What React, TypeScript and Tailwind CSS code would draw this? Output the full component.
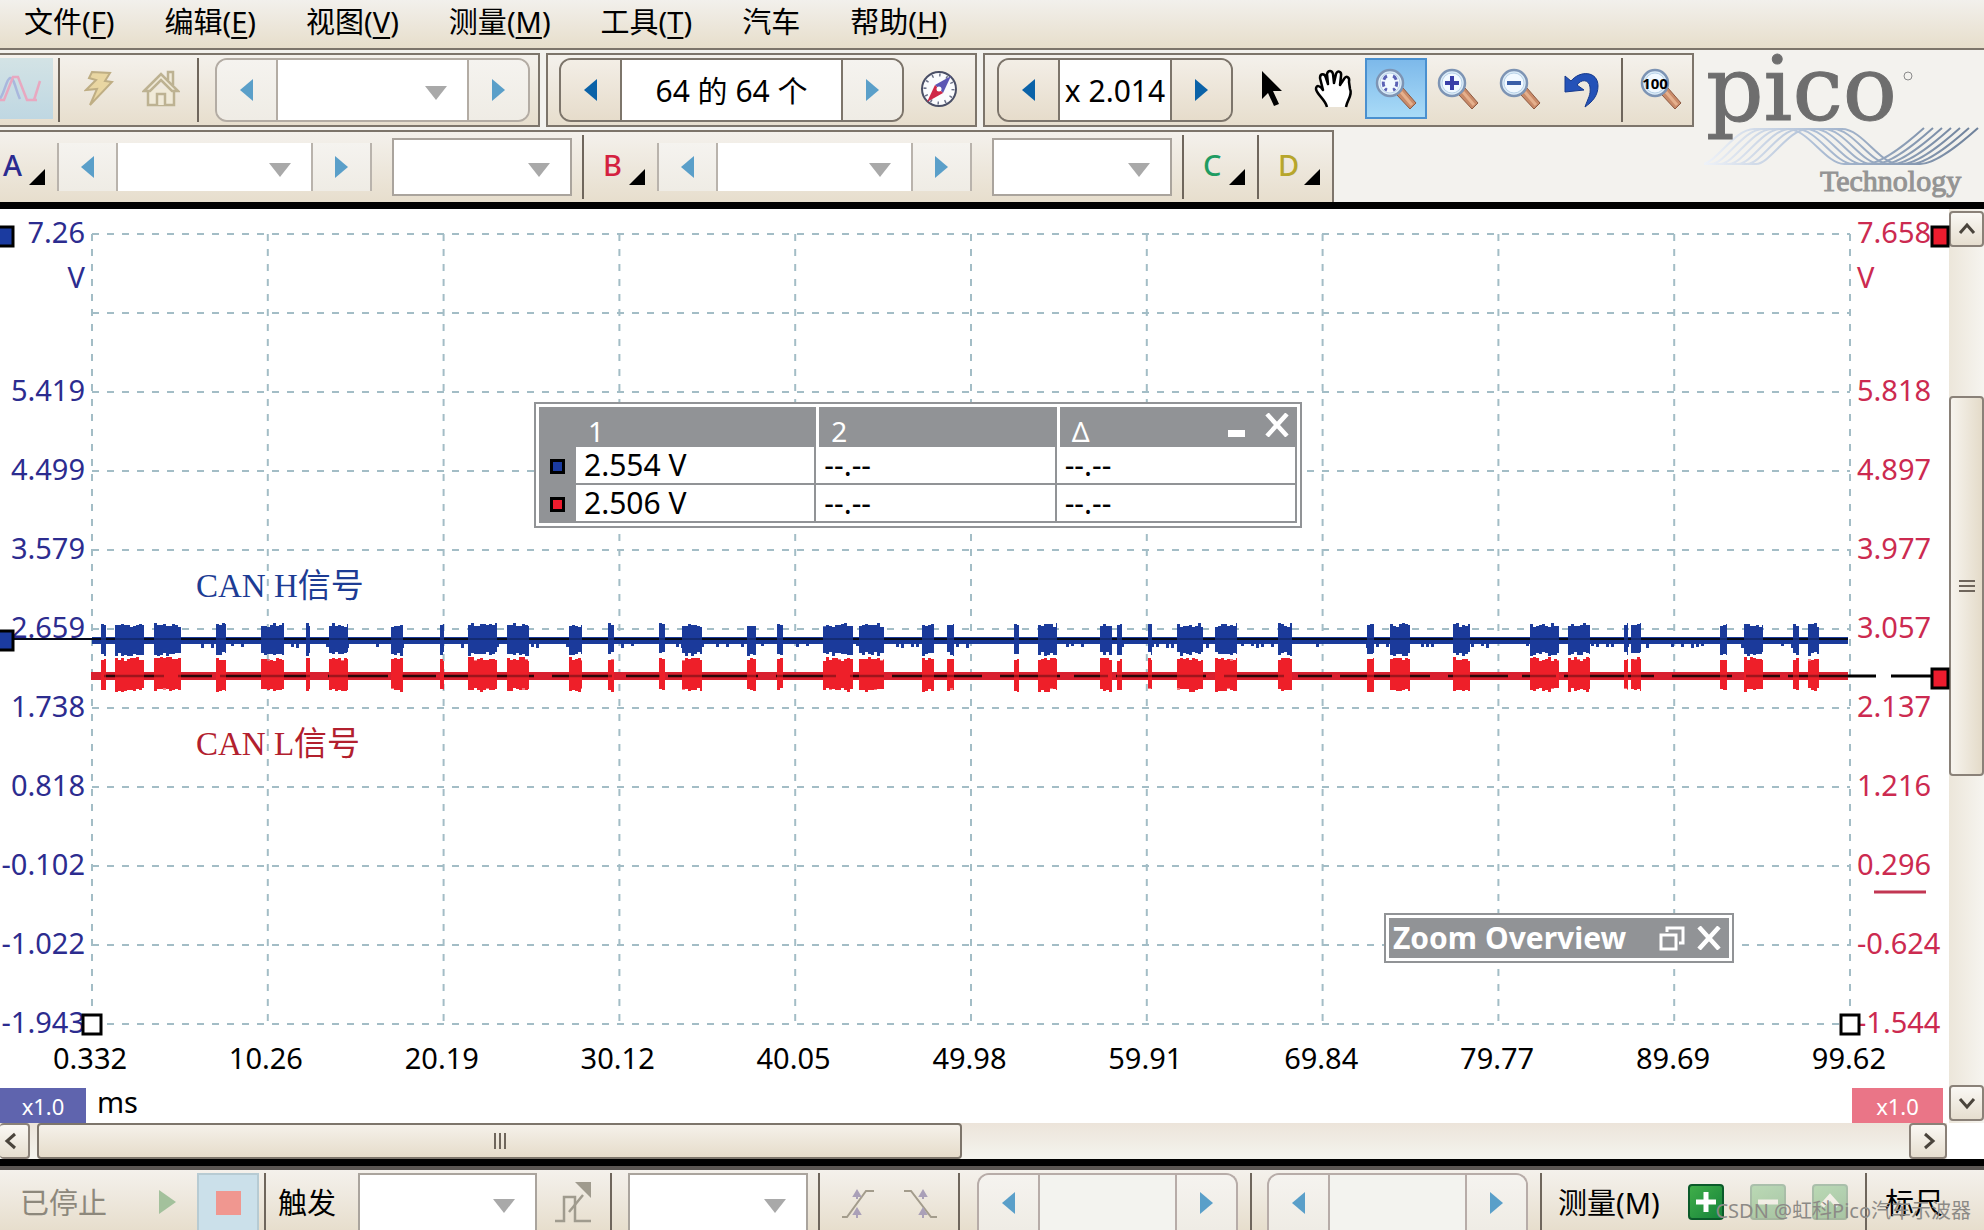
import { ReactNode } from "react";
import { clsx } from "clsx";

const menus = [
  { label: "文件", key: "F" },
  { label: "编辑", key: "E" },
  { label: "视图", key: "V" },
  { label: "测量", key: "M" },
  { label: "工具", key: "T" },
  { label: "汽车", key: "" },
  { label: "帮助", key: "H" },
];

const leftAxis = ["7.26", "", "5.419", "4.499", "3.579", "2.659", "1.738", "0.818", "-0.102", "-1.022", "-1.943"];
const rightAxis = ["7.658", "", "5.818", "4.897", "3.977", "3.057", "2.137", "1.216", "0.296", "-0.624", "-1.544"];
const timeAxis = ["0.332", "10.26", "20.19", "30.12", "40.05", "49.98", "59.91", "69.84", "79.77", "89.69", "99.62"];

// [start, end] of every CAN frame on the time axis, in plot units
const frames = [
  [9, 14], [23, 52], [62, 89], [124, 134], [169, 192], [214, 218], [237, 256], [299, 311], [348, 352],
  [376, 405], [415, 437], [477, 490], [516, 522], [567, 573], [590, 610], [655, 664], [685, 691],
  [731, 761], [767, 792], [830, 842], [855, 862], [922, 927], [946, 965], [1008, 1020], [1025, 1030],
  [1056, 1060], [1085, 1111], [1123, 1145], [1186, 1200], [1275, 1282], [1298, 1318], [1361, 1378],
  [1438, 1467], [1476, 1498], [1532, 1536], [1539, 1549], [1628, 1635], [1652, 1671], [1701, 1707], [1716, 1727],
];

function noise(n: number) {
  const v = Math.sin(n * 12.9898) * 43758.5453;
  return v - Math.floor(v);
}

function burstPath(top: number, bottom: number, seed: number) {
  return frames
    .map(([start, end]) => {
      let up = "";
      let down = "";
      for (let x = start; x < end; x += 3) {
        const next = Math.min(x + 3, end);
        const t = top + Math.round(noise(x + seed) * 4);
        const b = bottom - Math.round(noise(x * 2 + seed) * 4);
        up += `L${x} ${t}L${next} ${t}`;
        down = `L${next} ${b}L${x} ${b}` + down;
      }
      return "M" + (up + down).slice(1) + "Z";
    })
    .join("");
}

// small ripples hanging below the idle level between frames
function ripplePath() {
  let d = "";
  for (let x = 4; x < 1750; x += 5) {
    if (noise(x * 3) > 0.72) d += `M${x} 409v${3 + Math.round(noise(x) * 2)}h3v-5z`;
  }
  return d;
}

function Arrow({ dir, dim }: { dir: "left" | "right"; dim?: boolean }) {
  return (
    <svg width="13" height="22" viewBox="0 0 13 22" className={dim ? "text-[#5a9fc9]" : "text-[#0a62a8]"}>
      <path d={dir === "left" ? "M13 0V22L0 11Z" : "M0 0V22L13 11Z"} fill="currentColor" />
    </svg>
  );
}

function StepButton({ dir, dim, className }: { dir: "left" | "right"; dim?: boolean; className?: string }) {
  return (
    <button
      aria-label={dir === "left" ? "Previous" : "Next"}
      className={clsx(
        "flex w-[59px] shrink-0 items-center justify-center bg-gradient-to-b",
        dim ? "from-[#f5f3ef] to-[#efece5]" : "from-[#f3eee6] to-[#e6dccb]",
        className
      )}
    >
      <Arrow dir={dir} dim={dim} />
    </button>
  );
}

function Combo({ label, className }: { label: string; className?: string }) {
  return (
    <div className={clsx("relative shrink-0 bg-white", className)}>
      <select aria-label={label} className="size-full appearance-none bg-transparent outline-none">
        <option></option>
      </select>
      <svg width="22" height="14" viewBox="0 0 22 14" className="pointer-events-none absolute top-1/2 right-5 -mt-1">
        <path d="M0 0H22L11 14Z" fill="#a9a9a9" />
      </svg>
    </div>
  );
}

function Separator({ className }: { className?: string }) {
  return <div className={clsx("w-[2px] shrink-0 bg-[#6f665c]", className)} />;
}

function ToolButton({ label, active, children }: { label: string; active?: boolean; children: ReactNode }) {
  return (
    <button
      aria-label={label}
      className={clsx(
        "flex h-[61px] w-[62px] shrink-0 items-center justify-center",
        active && "border-2 border-[#4a90cf] bg-gradient-to-b from-[#7db9ea] to-[#a9dbf7]"
      )}
    >
      {children}
    </button>
  );
}

function Magnifier({ children }: { children?: ReactNode }) {
  return (
    <svg width="42" height="42" viewBox="0 0 42 42">
      <path d="M23 23l5-3 13 15-6 6-13-14z" fill="#c98a68" stroke="#8d5a42" />
      <path d="M26 24l11 13" stroke="#e5b08d" strokeWidth="3" />
      <circle cx="15" cy="15" r="13" fill="#dcecf8" stroke="#7d94b4" strokeWidth="2.5" />
      <circle cx="15" cy="15" r="10" fill="#f2f9ff" stroke="#b9d2e8" />
      {children}
    </svg>
  );
}

function ChannelButton({ name, color, className }: { name: string; color: string; className?: string }) {
  return (
    <button className={clsx("flex w-[73px] shrink-0 items-center justify-between pr-3 pb-1 pl-[19px] text-[29px] font-medium", className, color)}>
      {name}
      <svg width="16" height="16" viewBox="0 0 16 16" className="mt-6">
        <path d="M16 0V16H0Z" fill="#000" />
      </svg>
    </button>
  );
}

function ChannelControls({ name }: { name: string }) {
  return (
    <>
      <div className="my-2 flex shrink-0">
        <StepButton dir="left" dim className="border-l-2 border-[#b9b3ac]" />
        <Combo label={`${name} range`} className="w-[197px] border-x-2 border-[#b9b3ac]" />
        <StepButton dir="right" dim className="border-r-2 border-[#b9b3ac]" />
      </div>
      <Combo label={`${name} coupling`} className="my-[3px] ml-5 w-[180px] border-2 border-[#aaa49d]" />
    </>
  );
}

function CloseIcon() {
  return (
    <svg width="24" height="24" viewBox="0 0 24 24">
      <path d="M2 1L22 23M22 1L2 23" stroke="#fff" strokeWidth="4.5" />
    </svg>
  );
}

function PicoLogo() {
  const offsets = [0, 9, 18, 27, 36, 45, 54];
  return (
    <svg width="280" height="152" viewBox="0 0 280 152" className="ml-auto shrink-0" role="img" aria-label="pico Technology">
      <defs>
        <linearGradient id="wave" gradientUnits="userSpaceOnUse" x1="0" y1="0" x2="280" y2="0">
          <stop offset="0" stopColor="#eef2f8" />
          <stop offset="0.4" stopColor="#aebfd6" />
          <stop offset="1" stopColor="#6c7f98" />
        </linearGradient>
      </defs>
      {offsets.map((x) => (
        <path
          key={x}
          d={`M${x - 26} 114h24c14 0 32-35 52-35h34c20 0 38 35 56 35h22c16 0 40-20 58-36`}
          fill="none"
          stroke="url(#wave)"
          strokeWidth="2"
        />
      ))}
      <text x="2" y="70" fontSize="90" fontFamily="DejaVu Serif, serif" fill="#6e6e6e" stroke="#6e6e6e">pico</text>
      <circle cx="204" cy="26" r="4" fill="none" stroke="#8a8a8a" />
      <text x="116" y="141" fontSize="30" fontFamily="Liberation Serif, serif" fill="#949494" stroke="#949494">Technology</text>
    </svg>
  );
}

function Plot() {
  const columns = Array.from({ length: 11 }, (_, i) => i * 175.8);
  const rows = Array.from({ length: 11 }, (_, i) => i * 79);
  return (
    <svg viewBox="0 0 1758 790" preserveAspectRatio="none" className="absolute inset-0 size-full overflow-visible">
      <g stroke="#a3bdc6" strokeWidth="2" strokeDasharray="7 8">
        {columns.map((x) => <path key={x} d={`M${x} 0V790`} />)}
        {rows.map((y) => <path key={y} d={`M0 ${y}H1758`} />)}
      </g>

      {/* channel A */}
      <path d="M0 403H1756V410H0Z" fill="#1b3b9b" />
      <path d={ripplePath()} fill="#1b3b9b" />
      <path d={burstPath(389, 422, 3)} fill="#1b3b9b" />
      <path d="M-78 405H1756" stroke="#060a18" strokeWidth="2" />
      <path d={burstPath(392, 418, 8)} fill="#1b3b9b" fillOpacity="0.7" />

      {/* channel B */}
      <path d="M-1 438H1756V446H-1Z" fill="#d9202f" />
      <path d={burstPath(423, 458, 5)} fill="#ee1f2a" />
      <path d="M12 442H1756" stroke="#2a0508" strokeWidth="2.5" strokeDasharray="60 14 34 8 90 18" />
      <path d={burstPath(425, 456, 9)} fill="#ee1f2a" fillOpacity="0.6" />
      <path d="M1756 442H1784M1799 442H1840" stroke="#000" strokeWidth="3" />

      {/* ruler handles */}
      <g stroke="#000" strokeWidth="3">
        <rect x="-96" y="-7" width="17" height="19" fill="#1b3ba0" />
        <rect x="-96" y="397" width="17" height="19" fill="#1b3ba0" />
        <rect x="1840" y="-7" width="16" height="19" fill="#ed1c2e" />
        <rect x="1840" y="435" width="16" height="19" fill="#ed1c2e" />
        <rect x="-9" y="781" width="18" height="19" fill="#fff" />
        <rect x="1749" y="781" width="18" height="19" fill="#fff" />
      </g>
      <path d="M1782 658H1834" stroke="#c23652" strokeWidth="3" />
    </svg>
  );
}

function Readout({ color, value }: { color: string; value: string }) {
  return (
    <tr className="h-[38px]">
      <th scope="row" className="bg-[#919396]">
        <div className={clsx("mx-auto size-[15px] border-[3px] border-black", color)} />
      </th>
      <td className="border-r-2 border-b-2 border-[#919396] bg-white pl-2">{value}</td>
      <td className="border-r-2 border-b-2 border-[#919396] bg-white pl-2">--.--</td>
      <td className="border-r-2 border-b-2 border-[#919396] bg-white pl-2">--.--</td>
    </tr>
  );
}

function RulerWindow() {
  return (
    <div className="absolute top-[168px] left-[442px] w-[768px] border-2 border-[#919396] bg-white p-[3px]">
      <table className="w-full table-fixed border-separate border-spacing-0 text-left text-[30px] leading-[36px]">
        <thead>
          <tr className="h-[40px] bg-[#919396] text-[28px] text-white">
            <th className="w-[37px]" />
            <th className="pt-2 pl-3 font-normal leading-[30px]">1</th>
            <th className="border-l-[3px] border-white pt-2 pl-3 font-normal leading-[30px]">2</th>
            <th className="border-l-[3px] border-white pl-3 font-normal leading-[30px]">
              <div className="flex items-center">
                <span className="pt-2">Δ</span>
                <button aria-label="Minimize" className="mt-3 ml-auto h-[7px] w-[17px] bg-white" />
                <button aria-label="Close" className="mr-2 mb-1 ml-5">
                  <CloseIcon />
                </button>
              </div>
            </th>
          </tr>
        </thead>
        <tbody>
          <Readout color="bg-[#1b3ba0]" value="2.554 V" />
          <Readout color="bg-[#ed1c2e]" value="2.506 V" />
        </tbody>
      </table>
    </div>
  );
}

function ZoomOverview() {
  return (
    <div className="absolute right-[116px] bottom-[61px] w-[350px] border-2 border-[#919396] bg-white p-[3px]">
      <div className="flex h-[40px] items-center bg-[#919396] pr-2 pl-1 text-white">
        <span className="text-[30px] font-bold whitespace-nowrap">Zoom Overview</span>
        <button aria-label="Restore" className="ml-auto">
          <svg width="26" height="26" viewBox="0 0 26 26" fill="none" stroke="#fff" strokeWidth="3">
            <path d="M8 7V3H24V18H20" />
            <path d="M2 10H17V24H2Z" />
          </svg>
        </button>
        <button aria-label="Close" className="ml-3">
          <CloseIcon />
        </button>
      </div>
    </div>
  );
}

function ScrollButton({ label, d, className }: { label: string; d: string; className?: string }) {
  return (
    <button
      aria-label={label}
      className={clsx("flex shrink-0 items-center justify-center rounded border-2 border-[#8a8178] bg-gradient-to-b from-[#faf8f4] to-[#e6decf]", className)}
    >
      <svg width="20" height="20" viewBox="0 0 20 20" fill="none" stroke="#4a443c" strokeWidth="3">
        <path d={d} />
      </svg>
    </button>
  );
}

function MeasureButton({ label, d, dim }: { label: string; d: string; dim?: boolean }) {
  return (
    <button
      aria-label={label}
      className={clsx("flex size-9 shrink-0 items-center justify-center rounded border-2 border-[#0b5a2a] bg-gradient-to-br from-[#3fae49] to-[#12843a]", dim && "opacity-30")}
    >
      <svg width="24" height="24" viewBox="0 0 24 24" fill="none" stroke="#fff" strokeWidth="5">
        <path d={d} />
      </svg>
    </button>
  );
}

export default function App() {
  return (
    <div className="flex h-screen min-h-[700px] flex-col overflow-hidden bg-[#f3f2ee] font-['Noto_Sans','Noto_Sans_CJK_SC',sans-serif] text-black">
      <nav className="flex h-[50px] shrink-0 items-center gap-[50px] border-b-2 border-[#7d756b] bg-gradient-to-b from-[#f2f0ec] to-[#e7decb] pb-1 pl-6 text-[29px]">
        {menus.map((menu) => (
          <button key={menu.label} className="whitespace-nowrap">
            {menu.label}
            {menu.key && <>(<span className="underline decoration-2 underline-offset-4">{menu.key}</span>)</>}
          </button>
        ))}
      </nav>

      <header className="flex h-[152px] shrink-0 overflow-hidden">
        <div className="flex shrink-0 flex-col gap-[3px] pt-[3px]">
          <div className="flex gap-[6px]">
            <div className="flex h-[74px] border-2 border-l-0 border-[#7d756b] bg-gradient-to-b from-[#f4f1ec] to-[#e7decd] py-[3px] pr-2">
              <button aria-label="Scope mode" className="flex h-[61px] w-[53px] items-center bg-gradient-to-b from-[#d3e3e5] to-[#bfd7e2]">
                <svg width="42" height="28" viewBox="0 0 42 28" fill="none" strokeWidth="2.5">
                  <path d="M-2 26C4 22 6 4 10 3S16 16 20 24" stroke="#a9b7dd" />
                  <path d="M0 25H4L13 2H18L27 25H37" stroke="#e8a8c0" />
                  <path d="M34 25L40 6" stroke="#e8a8c0" />
                </svg>
              </button>
              <Separator className="mr-2 ml-[5px]" />
              <ToolButton label="Auto setup">
                <svg width="30" height="38" viewBox="0 0 30 38">
                  <path d="M8 2L26 3 21 11 28 12 6 35 13 19 2 20 12 10 5 8Z" fill="#e9d6a2" stroke="#bfae84" strokeWidth="2" />
                </svg>
              </ToolButton>
              <ToolButton label="Home">
                <svg width="38" height="38" viewBox="0 0 38 38" fill="#f0ead8" stroke="#bdb292" strokeWidth="2.5">
                  <path d="M26 10V2H31V15" />
                  <path d="M6 19V35H32V19" />
                  <path d="M2 21L19 4 36 21H30L19 10 8 21Z" />
                  <path d="M15 35V24H23V35" />
                </svg>
              </ToolButton>
              <Separator className="mr-4 ml-[5px]" />
              <div className="flex w-[315px] overflow-hidden rounded-xl border-2 border-[#b3aca4]">
                <StepButton dir="left" dim />
                <Combo label="Timebase" className="flex-1 border-x-2 border-[#b3aca4]" />
                <StepButton dir="right" dim />
              </div>
            </div>

            <div className="flex h-[74px] border-2 border-[#7d756b] bg-gradient-to-b from-[#f4f1ec] to-[#e7decd] py-[3px] pr-[5px] pl-[11px]">
              <div className="mr-1 flex w-[345px] overflow-hidden rounded-xl border-2 border-[#7d756b]">
                <StepButton dir="left" />
                <input
                  aria-label="Waveform buffer"
                  readOnly
                  value="64 的 64 个"
                  className="min-w-0 flex-1 border-x-2 border-[#7d756b] bg-white text-center text-[30px] outline-none"
                />
                <StepButton dir="right" dim />
              </div>
              <ToolButton label="Buffer navigator">
                <svg width="38" height="38" viewBox="0 0 38 38">
                  <circle cx="19" cy="19" r="17" fill="#fafbfd" stroke="#4a4f66" strokeWidth="2" />
                  <circle cx="19" cy="19" r="14" fill="none" stroke="#6a7088" strokeWidth="3" strokeDasharray="1.5 5.8" />
                  <path d="M31 6L23 23 15 15Z" fill="#5b56b4" />
                  <path d="M7 32L15 15 23 23Z" fill="#d02646" />
                  <circle cx="19" cy="19" r="2.5" fill="#fff" />
                </svg>
              </ToolButton>
            </div>

            <div className="flex h-[74px] border-2 border-[#7d756b] bg-gradient-to-b from-[#f4f1ec] to-[#e7decd] py-[3px] pl-3">
              <div className="mr-2 flex w-[236px] overflow-hidden rounded-xl border-2 border-[#7d756b]">
                <StepButton dir="left" />
                <input
                  aria-label="Zoom factor"
                  readOnly
                  value="x 2.014"
                  className="min-w-0 flex-1 border-x-2 border-[#7d756b] bg-white text-center text-[30px] outline-none"
                />
                <StepButton dir="right" />
              </div>
              <ToolButton label="Select">
                <svg width="22" height="36" viewBox="0 0 22 36">
                  <path d="M1 0V28L7 22 13 35 18 33 12 20H21Z" fill="#000" />
                </svg>
              </ToolButton>
              <ToolButton label="Pan">
                <svg width="40" height="40" viewBox="0 0 40 40" fill="#fff" stroke="#000" strokeWidth="2.5" strokeLinejoin="round">
                  <path d="M13 38C11 30 3 26 2 20 2 16 6 16 9 21L6 9C6 4 11 4 12 9L14 15 13 5C14 1 18 1 19 5L20 14 22 5C23 1 28 2 27 7L26 16 30 10C32 6 36 8 35 13L36 20C39 26 33 31 32 38" />
                </svg>
              </ToolButton>
              <ToolButton label="Marquee zoom" active>
                <Magnifier>
                  <path d="M12 8C7 10 7 20 12 22M18 8C23 10 23 20 18 22" fill="none" stroke="#5b62b5" strokeWidth="3" strokeDasharray="5 2" />
                </Magnifier>
              </ToolButton>
              <ToolButton label="Zoom in">
                <Magnifier>
                  <path d="M15 8V22M8 15H22" stroke="#3a3fa8" strokeWidth="4" />
                </Magnifier>
              </ToolButton>
              <ToolButton label="Zoom out">
                <Magnifier>
                  <path d="M8 15H22" stroke="#3a5fa8" strokeWidth="4" />
                </Magnifier>
              </ToolButton>
              <ToolButton label="Undo zoom">
                <svg width="36" height="38" viewBox="0 0 36 38">
                  <path d="M1 6L7 11C16 0 34 1 34 16 34 26 28 32 21 37 24 28 27 25 26 17 25 9 17 9 13 15L20 20 1 22Z" fill="#2452b8" stroke="#173a8c" />
                </svg>
              </ToolButton>
              <Separator className="mr-[7px] ml-2" />
              <ToolButton label="Zoom 100%">
                <Magnifier>
                  <text x="15" y="21" textAnchor="middle" fontSize="15" fontWeight="bold" fill="#000">100</text>
                </Magnifier>
              </ToolButton>
            </div>
          </div>

          <div className="flex h-[72px] self-start border-2 border-b-0 border-l-0 border-[#7d756b] bg-gradient-to-b from-[#f4f1ec] to-[#e7decd] py-[3px]">
            <ChannelButton name="A" color="text-[#2b2b90]" className="-ml-4" />
            <ChannelControls name="A" />
            <Separator className="ml-[10px]" />
            <ChannelButton name="B" color="text-[#d4213f]" />
            <ChannelControls name="B" />
            <Separator className="ml-[10px]" />
            <ChannelButton name="C" color="text-[#1f9c62]" />
            <Separator />
            <ChannelButton name="D" color="text-[#b7a62c]" />
          </div>
        </div>
        <PicoLogo />
      </header>

      <div className="h-[7px] shrink-0 bg-black" />

      <main className="flex min-h-0 flex-1 bg-white">
        <div className="flex min-w-0 flex-1 flex-col text-[29px] leading-[30px]">
          <div className="flex min-h-0 flex-1 pt-[25px]">
            <div className="-mt-[17px] -mb-[13px] flex w-[92px] shrink-0 flex-col justify-between pr-[7px] text-right text-[#2c2c8f]">
              {leftAxis.map((value, i) => (
                <div key={i} className="h-[30px]">
                  {value}
                  {i === 0 && <div className="mt-[15px]">V</div>}
                </div>
              ))}
            </div>
            <div className="relative min-w-0 flex-1">
              <Plot />
              <div className="absolute top-[337px] left-[104px] font-['Liberation_Serif','Noto_Sans_CJK_SC',serif] text-[33px] text-[#1d3c94]">CAN H信号</div>
              <div className="absolute top-[495px] left-[104px] font-['Liberation_Serif','Noto_Sans_CJK_SC',serif] text-[33px] text-[#b2202e]">CAN L信号</div>
              <RulerWindow />
              <ZoomOverview />
            </div>
            <div className="-mt-[17px] -mb-[13px] flex w-[99px] shrink-0 flex-col justify-between pl-[7px] text-[#cc2a50]">
              {rightAxis.map((value, i) => (
                <div key={i} className="h-[30px]">
                  {value}
                  {i === 0 && <div className="mt-[15px]">V</div>}
                </div>
              ))}
            </div>
          </div>
          <div className="flex h-[64px] shrink-0 items-center justify-between pt-1 pr-[60px] pl-[50px]">
            {timeAxis.map((value) => (
              <span key={value} className="w-20 text-center">{value}</span>
            ))}
          </div>
          <div className="flex h-[35px] shrink-0 items-start">
            <button className="h-full w-[86px] bg-[#5f64ae] text-[22px] text-white">x1.0</button>
            <span className="ml-[11px] text-[29px] leading-[28px]">ms</span>
            <button className="mr-[6px] ml-auto h-full w-[91px] bg-[#ea7587] text-[22px] text-white">x1.0</button>
          </div>
        </div>

        {/* vertical scroll bar */}
        <div className="flex w-[35px] shrink-0 flex-col bg-gradient-to-r from-[#ece6da] to-[#f6f4ef] py-[2px]">
          <ScrollButton label="Scroll up" d="M3 14L10 6L17 14" className="h-9" />
          <div className="flex flex-1 flex-col">
            <div className="h-[149px]" />
            <div className="flex h-[380px] flex-col items-center justify-center gap-[3px] rounded border-2 border-[#8a8178] bg-gradient-to-r from-[#f7f4ee] to-[#e4dbc9]">
              <div className="h-[2px] w-4 bg-[#6f665c]" />
              <div className="h-[2px] w-4 bg-[#6f665c]" />
              <div className="h-[2px] w-4 bg-[#6f665c]" />
            </div>
          </div>
          <ScrollButton label="Scroll down" d="M3 6L10 14L17 6" className="h-9" />
        </div>
      </main>

      {/* horizontal scroll bar */}
      <div className="flex h-9 shrink-0 bg-white">
        <div className="flex flex-1 bg-gradient-to-b from-[#ece4da] to-[#f4f4ee]">
          <ScrollButton label="Scroll left" d="M13 3L5 10L13 17" className="w-[30px] border-l-0 pr-1" />
          <div className="ml-[7px] flex w-[925px] items-center justify-center gap-[3px] rounded border-2 border-[#7d756b] bg-gradient-to-b from-[#f5f1ea] to-[#e6dcca]">
            <div className="h-4 w-[2px] bg-[#6f665c]" />
            <div className="h-4 w-[2px] bg-[#6f665c]" />
            <div className="h-4 w-[2px] bg-[#6f665c]" />
          </div>
          <ScrollButton label="Scroll right" d="M7 3L15 10L7 17" className="ml-auto w-[38px]" />
        </div>
        <div className="w-[37px]" />
      </div>

      <div className="h-[11px] shrink-0 border-b-4 border-[#5b5653] bg-black" />

      <footer className="relative flex h-[60px] shrink-0 overflow-hidden bg-gradient-to-b from-[#f4f1ec] to-[#e7decd] pt-[3px] text-[29px]">
        <span className="w-[138px] shrink-0 pt-2 pl-5 text-[#8d887c]">已停止</span>
        <button aria-label="Start" className="mr-[1px] flex w-[58px] shrink-0 items-center justify-center">
          <svg width="17" height="24" viewBox="0 0 17 24">
            <path d="M0 0L17 12 0 24Z" fill="#a3c19c" />
          </svg>
        </button>
        <button aria-label="Stop" className="flex w-[62px] shrink-0 items-center justify-center border-2 border-b-0 border-[#b7cbd3] bg-[#cbe0ea]">
          <svg width="25" height="24" viewBox="0 0 25 24">
            <path d="M0 0H25V24H0Z" fill="#f09790" />
          </svg>
        </button>
        <Separator className="ml-[5px]" />
        <span className="w-[92px] shrink-0 pt-2 pl-3">触发</span>
        <Combo label="触发" className="w-[179px] border-2 border-b-0 border-[#aaa49d]" />
        <button aria-label="Advanced trigger" className="flex w-[73px] shrink-0 items-center justify-center">
          <svg width="38" height="42" viewBox="0 0 38 42" fill="none" stroke="#a09b8e" strokeWidth="2.5">
            <path d="M0 40H9V16H20V40H36" />
            <path d="M20 1H36V17Z" fill="#a09b8e" stroke="none" />
            <path d="M14 31L28 14" />
          </svg>
        </button>
        <Separator />
        <Combo label="Trigger source" className="ml-4 w-[180px] border-2 border-b-0 border-[#aaa49d]" />
        <Separator className="mr-2 ml-[10px]" />
        <ToolButton label="Rising edge">
          <svg width="36" height="30" viewBox="0 0 36 30" fill="none" stroke="#a39c8c" strokeWidth="2">
            <path d="M1 28H6L25 2H33" />
            <path d="M16 10V4M13 7L16 2 19 7ZM16 29V22M13 25L16 20 19 25Z" stroke="#aaa0b8" fill="#aaa0b8" />
          </svg>
        </ToolButton>
        <ToolButton label="Falling edge">
          <svg width="36" height="30" viewBox="0 0 36 30" fill="none" stroke="#a39c8c" strokeWidth="2">
            <path d="M1 2H8L28 28H34" />
            <path d="M20 10V4M17 7L20 2 23 7ZM20 29V22M17 25L20 20 23 25Z" stroke="#aaa0b8" fill="#aaa0b8" />
          </svg>
        </ToolButton>
        <Separator className="ml-[6px]" />
        <div className="ml-[17px] flex w-[261px] shrink-0 overflow-hidden rounded-t-xl border-2 border-b-0 border-[#b7aca8]">
          <StepButton dir="left" dim />
          <input aria-label="Threshold" className="min-w-0 flex-1 border-x-2 border-[#b7aca8] bg-[#f3f3ef] outline-none" />
          <StepButton dir="right" dim />
        </div>
        <Separator className="ml-3" />
        <div className="ml-[15px] flex w-[261px] shrink-0 overflow-hidden rounded-t-xl border-2 border-b-0 border-[#b7aca8]">
          <StepButton dir="left" dim />
          <input aria-label="Pre-trigger" className="min-w-0 flex-1 border-x-2 border-[#b7aca8] bg-[#f3f3ef] outline-none" />
          <StepButton dir="right" dim />
        </div>
        <Separator className="ml-3" />
        <span className="w-[146px] shrink-0 pt-2 pl-4">测量(M)</span>
        <div className="flex shrink-0 gap-[26px] pt-[11px]">
          <MeasureButton label="Add measurement" d="M12 2V22M2 12H22" />
          <MeasureButton label="Remove measurement" d="M2 12H22" dim />
          <MeasureButton label="Edit measurement" d="M4 16L12 7L20 16" dim />
        </div>
        <Separator className="ml-[17px]" />
        <span className="shrink-0 pt-2 pl-[18px]">标尺</span>
        <div className="absolute right-[13px] bottom-1 text-[20px] leading-[30px] whitespace-nowrap text-[#8c8a86]">CSDN @虹科Pico汽车示波器</div>
      </footer>
    </div>
  );
}
